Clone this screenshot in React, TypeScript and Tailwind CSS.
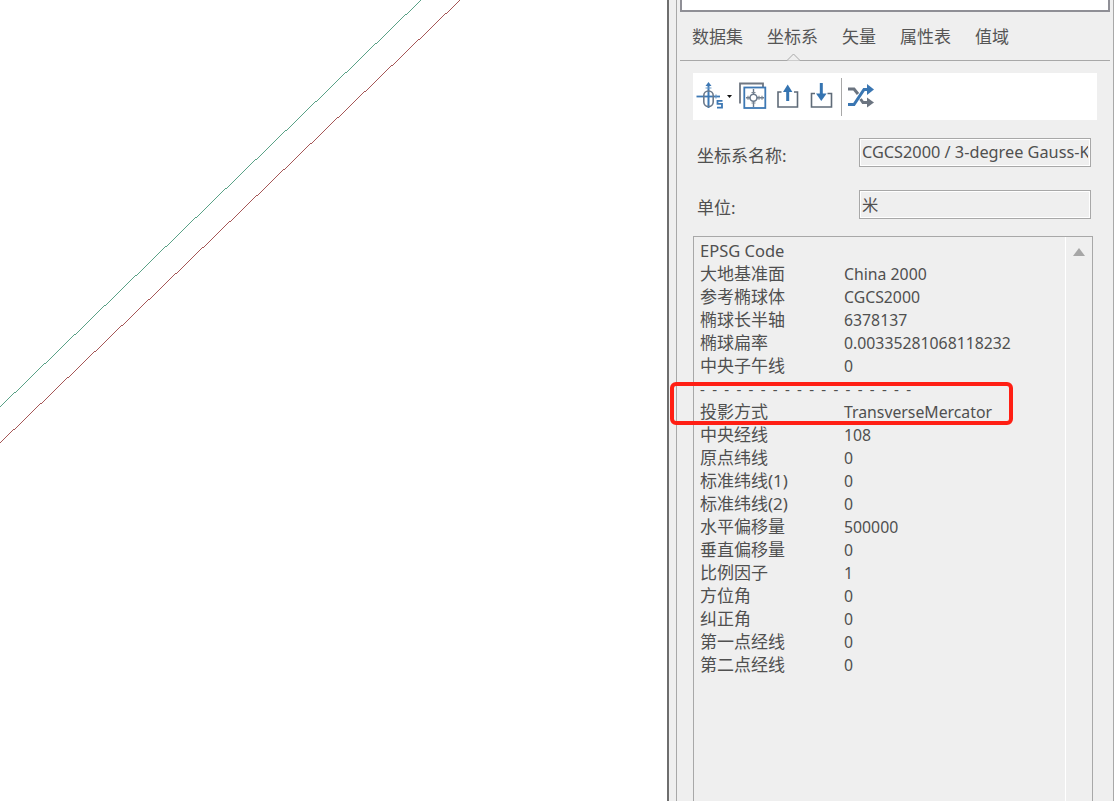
const FONT = "font-['Noto_Sans','Noto_Sans_CJK_SC',sans-serif]";

const rows: [string, string][] = [
  ["大地基准面", "China 2000"],
  ["参考椭球体", "CGCS2000"],
  ["椭球长半轴", "6378137"],
  ["椭球扁率", "0.00335281068118232"],
  ["中央子午线", "0"],
];
const rowsB: [string, string][] = [
  ["投影方式", "TransverseMercator"],
  ["中央经线", "108"],
  ["原点纬线", "0"],
  ["标准纬线(1)", "0"],
  ["标准纬线(2)", "0"],
  ["水平偏移量", "500000"],
  ["垂直偏移量", "0"],
  ["比例因子", "1"],
  ["方位角", "0"],
  ["纠正角", "0"],
  ["第一点经线", "0"],
  ["第二点经线", "0"],
];

const tabs = ["数据集", "坐标系", "矢量", "属性表", "值域"];

function Row({ k, v }: { k: string; v: string }) {
  return (
    <div className="flex h-[23px] whitespace-nowrap">
      <span className="w-[144px] shrink-0 text-[17px]">{k}</span>
      <span className="text-[15.800px] pt-[1px]">{v}</span>
    </div>
  );
}

function Toolbar() {
  return (
    <div className="mx-4 mt-3 h-[47px] bg-white shrink-0">
      <svg width="190" height="47" viewBox="0 0 190 47" fill="none" className="block">
        {/* coordinate system icon */}
        <path d="M3.500 23.500H27" stroke="#3d78b4" strokeWidth="1.800" />
        <path d="M15.500 11V35" stroke="#3d78b4" strokeWidth="2" />
        <path d="M15.500 9l-3 4h6z" fill="#3d78b4" />
        <rect x="10.800" y="18" width="9.400" height="15.500" rx="4.500" stroke="#6b7a8c" strokeWidth="1.600" />
        <path d="M12.500 15h6M23 23.500v-2M23 23.500v2" stroke="#6b9ac8" strokeWidth="1.200" />
        <path d="M29.500 27.800h-5v3h4.500v3.800h-5" stroke="#3d78b4" strokeWidth="1.800" />
        <path d="M34 22h5l-2.500 3z" fill="#111" />
        {/* map frame icon */}
        <path d="M47 30.500V10.500H70V14" stroke="#6f7782" strokeWidth="1.800" />
        <rect x="51.300" y="14.500" width="21" height="20.500" fill="#fff" stroke="#3d78b4" strokeWidth="1.800" />
        <path d="M53 24.700H71M60.500 16V34" stroke="#6b7a8c" strokeWidth="1.400" />
        <path d="M55 22.700v4M66 22.700v4M69 22.700v4M58.500 19.500h4M58.500 30h4" stroke="#7d8894" strokeWidth="1.200" />
        <circle cx="60.500" cy="24.700" r="3.500" fill="#fff" stroke="#6b7a8c" strokeWidth="1.600" />
        {/* export */}
        <path d="M88.500 19H85v15h19.500V19H101" stroke="#5f6b78" strokeWidth="1.600" />
        <path d="M94.700 28V16" stroke="#3574b1" strokeWidth="3" />
        <path d="M90 19l4.700-7.500 4.700 7.500z" fill="#3574b1" />
        {/* import */}
        <path d="M122 20.500H118.500V34H138.500V20.500H134.500" stroke="#5f6b78" strokeWidth="1.600" />
        <path d="M128.300 10V21" stroke="#3574b1" strokeWidth="3" />
        <path d="M123 20.500l5.300 7.500 5.300-7.500z" fill="#3574b1" />
        {/* divider */}
        <path d="M148.500 5V43" stroke="#a8a8a8" strokeWidth="1" />
        {/* shuffle */}
        <path d="M155 31.500H161L171 16.500H176" stroke="#3a76b2" strokeWidth="3" />
        <path d="M174 11L181 16.500L174 22z" fill="#3a76b2" />
        <path d="M155 16H161L165 21M167.500 26L170 29.500H176" stroke="#6b7480" strokeWidth="3" />
        <path d="M174 24.500L181 29.500L174 34.500z" fill="#6b7480" />
      </svg>
    </div>
  );
}

function Field({ label, value, cls }: { label: string; value: string; cls: string }) {
  return (
    <div className={`flex items-center justify-between ml-[20px] mr-[22px] ${cls}`}>
      <span className="text-[17px] leading-[22px] text-[#505050] mt-[6px]">{label}</span>
      <input
        readOnly
        value={value}
        className="w-[232px] h-[29px] border border-[#a8a8a8] shadow-[inset_0_0_0_1px_#fff] px-[2px] pb-[1px] text-[16.300px] text-[#505050] bg-transparent outline-none"
      />
    </div>
  );
}

export default function App() {
  return (
    <div className={`${FONT} relative w-[1114px] h-[801px] overflow-hidden flex bg-white`}>
      <div className="w-[667px] h-full">
        <svg className="w-full h-full block" viewBox="0 0 667 801" shapeRendering="crispEdges">
          <path d="M0 407L421 0" stroke="#2f8a68" strokeWidth="0.800" fill="none" />
          <path d="M0 443L460 0" stroke="#8f2c2c" strokeWidth="0.800" fill="none" />
        </svg>
      </div>
      <div className="flex-1 h-full bg-[#efefef] border-l-2 border-[#6e6e6e] pl-[7px] flex">
        <div className="flex-1 border-l border-r border-[#a8a8a8] flex flex-col min-w-0">
          <div className="h-[12px] shrink-0 mx-[3px] bg-white border-2 border-t-0 border-[#8f8f96]" />
          <div className="flex h-[49px] shrink-0 mx-[3px] border-b border-[#a8a8a8] relative pl-[12px] gap-[24px] items-start pt-[13px] text-[17px] leading-[24px] text-[#555]">
            {tabs.map((t) => (
              <span key={t}>{t}</span>
            ))}
            <svg className="absolute left-[106px] bottom-[-1px]" width="15" height="8" viewBox="0 0 15 8">
              <path d="M0 7.500H1L7.500 1L14 7.500H15" stroke="#a8a8a8" fill="#efefef" />
            </svg>
          </div>
          <Toolbar />
          <Field label="坐标系名称:" value="CGCS2000 / 3-degree Gauss-Kruger zone 36" cls="mt-[18px]" />
          <Field label="单位:" value="米" cls="mt-[23px]" />
          <div className="ml-4 mr-5 mt-[17px] flex-1 border border-[#a8a8a8] border-b-0 flex min-h-0">
            <div className="flex-1 pt-[2px] pl-[6px] leading-[23px] text-[#505050]">
              <div className="h-[23px] text-[16.500px]">EPSG Code</div>
              {rows.map(([k, v]) => (
                <Row key={k} k={k} v={v} />
              ))}
              <div className="h-[23px] text-[15px] tracking-[1.700px] whitespace-nowrap pt-[1px]">- - - - - - - - - - - - - - - - - -</div>
              {rowsB.map(([k, v]) => (
                <Row key={k} k={k} v={v} />
              ))}
            </div>
            <div className="w-[27px] border-l border-white flex justify-center pt-[10px]">
              <svg width="14" height="10" viewBox="0 0 14 10" className="block">
                <path d="M7 1l6 8H1z" fill="#a6a6a6" />
              </svg>
            </div>
          </div>
        </div>
      </div>
      <div className="absolute left-[670px] top-[382px] w-[343px] h-[43px] border-[4px] border-[#ff1f14] rounded-[6px]" />
    </div>
  );
}
